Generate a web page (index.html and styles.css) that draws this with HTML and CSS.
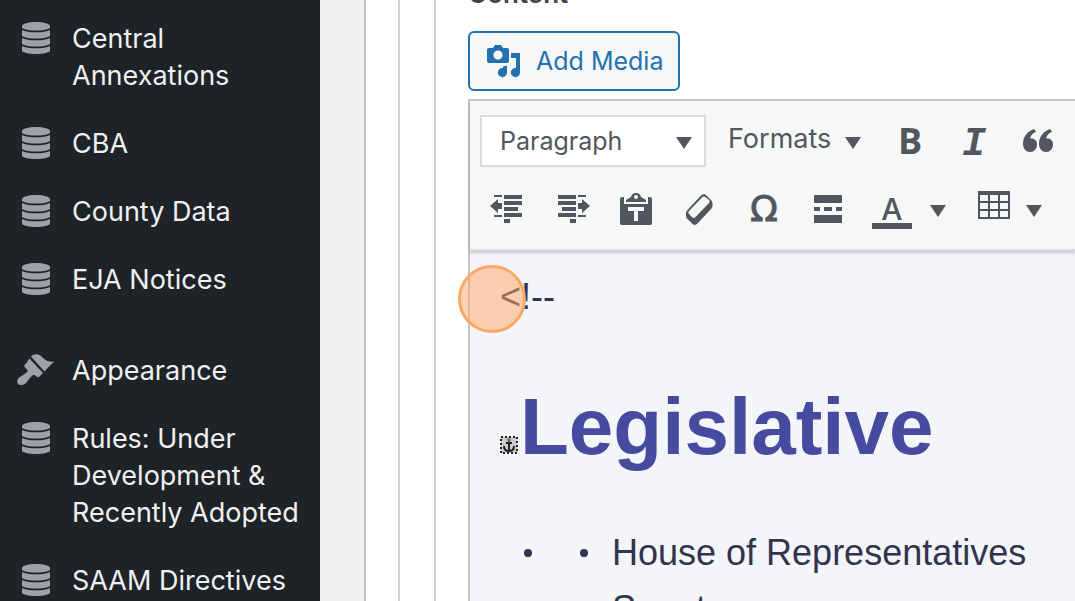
FILE: index.html
```html
<!DOCTYPE html>
<html lang="en">
<head>
    <meta charset="UTF-8">
    <meta name="viewport" content="width=device-width, initial-scale=1.0">
    <title>Edit Page</title>
    <link rel="stylesheet" href="styles.css">
</head>
<body>
    <!-- Shared icons -->
    <svg class="sprite" aria-hidden="true">
        <symbol id="database" viewBox="0 0 28 32">
            <path d="M0 4c0-2 6-4 14-4s14 2 14 4v2c-3 2-8 2.500-14 2.500S3 8 0 6z"/>
            <path d="M0 8c3 1.800 8 2.300 14 2.300s11-.5 14-2.300V14c-3 2-8 2.500-14 2.500S3 16 0 14z"/>
            <path d="M0 16c3 1.800 8 2.300 14 2.300s11-.5 14-2.300V22c-3 2-8 2.500-14 2.500S3 24 0 22z"/>
            <path d="M0 24c3 1.800 8 2.300 14 2.300s11-.5 14-2.300V29c-2 2-7 3-14 3S2 31 0 29z"/>
        </symbol>
        <symbol id="caret" viewBox="0 0 16 12">
            <path d="M0 0h16L8 12z"/>
        </symbol>
    </svg>

    <div class="layout">
        <!-- Admin menu -->
        <nav class="sidebar">
            <ul class="menu">
                <li><a href="#"><span class="menu-icon"><svg width="28" height="32"><use href="#database"/></svg></span>Central Annexations</a></li>
                <li><a href="#"><span class="menu-icon"><svg width="28" height="32"><use href="#database"/></svg></span>CBA</a></li>
                <li><a href="#"><span class="menu-icon"><svg width="28" height="32"><use href="#database"/></svg></span>County Data</a></li>
                <li><a href="#"><span class="menu-icon"><svg width="28" height="32"><use href="#database"/></svg></span>EJA Notices</a></li>
                <li class="separated"><a href="#"><span class="menu-icon"><svg width="38" height="32" viewBox="0 0 38 32">
                    <path d="M14 2.500C17-.3 21-.5 24 2c4 4 7 6.500 13.500 5.500C33.500 10 31 14 27.500 17.500z"/>
                    <path d="M12.500 4.500 26 19l-3.500 3.500c-1 1-2 1-3 0L17 20.500c-2 1-4 3-6 6C8.500 30 6.500 31.500 3 31c-3.500-1-3.500-5-1-7.500 2.500-2 6-3 9-6.500l-3-3.500c-1-1-.8-2 0-3 2-1.500 2.500-4 4.500-6z"/>
                </svg></span>Appearance</a></li>
                <li><a href="#"><span class="menu-icon"><svg width="28" height="32"><use href="#database"/></svg></span>Rules: Under Development &amp; Recently Adopted</a></li>
                <li><a href="#"><span class="menu-icon"><svg width="28" height="32"><use href="#database"/></svg></span>SAAM Directives</a></li>
            </ul>
        </nav>

        <main class="main">
            <div class="panel">
                <div class="group">
                    <div class="field">
                        <div class="field-label">Content</div>

                        <button type="button" class="add-media">
                            <svg width="34" height="34" viewBox="0 0 34 34">
                                <path fill-rule="evenodd" d="M6 4l2-3h6l2 3h4q2 0 2 2v11q0 2-2 2H2q-2 0-2-2V6q0-2 2-2zM11 6.500a4.600 4.600 0 1 0 0 9.200 4.600 4.600 0 0 0 0-9.200z"/>
                                <path d="M24 9h9v19.500a4.600 4.600 0 1 1-4-4.500V14h-5z"/>
                                <path d="M16 22.500l4-1v7a4.600 4.600 0 1 1-4-4.500z"/>
                            </svg>
                            Add Media
                        </button>

                        <div class="editor">
                            <div class="toolbar">
                                <div class="toolbar-row">
                                    <div class="format-select">
                                        <select aria-label="Block format">
                                            <option>Paragraph</option>
                                            <option>Heading 1</option>
                                            <option>Heading 2</option>
                                        </select>
                                        <svg class="caret" width="16" height="12"><use href="#caret"/></svg>
                                    </div>
                                    <button type="button" class="formats">Formats <svg width="16" height="12"><use href="#caret"/></svg></button>
                                    <button type="button" class="tool bold" aria-label="Bold">B</button>
                                    <button type="button" class="tool italic" aria-label="Italic">I</button>
                                    <button type="button" class="tool" aria-label="Blockquote">
                                        <svg width="40" height="40" viewBox="0 0 40 40">
                                            <path d="M16 8l2 3c-4 1.500-5.500 4-5.500 6.500 4-.5 6.500 2 6.500 6S16 31 12.500 31C8 31 5 27.500 5 22.500 5 15.500 10 10 16 8z"/>
                                            <path d="M32 8l2 3c-4 1.500-5.500 4-5.500 6.500 4-.5 6.500 2 6.500 6S32 31 28.500 31c-4.500 0-7.500-3.500-7.500-8.500C21 15.500 26 10 32 8z"/>
                                        </svg>
                                    </button>
                                </div>

                                <div class="toolbar-row">
                                    <button type="button" class="tool" aria-label="Decrease indent">
                                        <svg width="40" height="40" viewBox="0 0 40 40">
                                            <path d="M2 17l8-7v4h4v6h-4v4zM6 6h8v2H6zM6 26h8v2H6zM16 6h18v4H16zM16 12h18v4H16zM16 18h14v4H16zM16 24h18v4H16zM16 30h6v4h-6z"/>
                                        </svg>
                                    </button>
                                    <button type="button" class="tool" aria-label="Increase indent">
                                        <svg width="40" height="40" viewBox="0 0 40 40">
                                            <path d="M38 17l-8-7v4h-4v6h4v4zM26 6h8v2h-8zM26 26h8v2h-8zM6 6h18v4H6zM6 12h18v4H6zM10 18h14v4H10zM6 24h18v4H6zM18 30h6v4h-6z"/>
                                        </svg>
                                    </button>
                                    <button type="button" class="tool" aria-label="Paste as text">
                                        <svg width="40" height="40" viewBox="0 0 40 40">
                                            <path fill-rule="evenodd" d="M10 11l5-3q1-4 5-4t5 4l5 3v2H10zM20 6a2 2 0 1 0 0 4 2 2 0 0 0 0-4z"/>
                                            <path fill-rule="evenodd" d="M6 8h2v7h24V8h2q2 0 2 2v24q0 2-2 2H6q-2 0-2-2V10q0-2 2-2zM12 18v4h6v10h4V22h6v-4z"/>
                                        </svg>
                                    </button>
                                    <button type="button" class="tool" aria-label="Clear formatting">
                                        <svg width="40" height="40" viewBox="0 0 40 40">
                                            <path fill-rule="evenodd" d="M21 6.500q3-2.500 5.500 0l4.500 4.500q1.500 1.500 1.500 4v2q0 1.500-1.500 3L17.500 34.500q-2.500 2.500-5 .5L7.500 30Q6 28.500 6 26.500V24q0-1.500 1.500-3zM22.500 8 9 22q-1.500 2 0 3l3.500 3.500q1.500 1 3-.5L29 14q1.500-2 0-3l-3.500-3q-1.500-1-3 0z"/>
                                        </svg>
                                    </button>
                                    <button type="button" class="tool omega" aria-label="Special character">Ω</button>
                                    <button type="button" class="tool" aria-label="Read more">
                                        <svg width="40" height="40" viewBox="0 0 40 40">
                                            <path d="M6 6h28v8H6zM6 18h6v4H6zM16 18h8v4h-8zM28 18h6v4h-6zM6 26h28v8H6z"/>
                                        </svg>
                                    </button>
                                    <div class="split">
                                        <button type="button" class="tool" aria-label="Text color"><span class="text-color">A</span></button>
                                        <button type="button" class="open" aria-label="Choose text color"><svg width="16" height="12"><use href="#caret"/></svg></button>
                                    </div>
                                    <div class="split">
                                        <button type="button" class="tool narrow" aria-label="Table">
                                            <svg width="32" height="36" viewBox="0 0 32 36">
                                                <path fill-rule="evenodd" d="M0 0h32v28H0zM2 4v6h8V4zM12 4v6h8V4zM22 4v6h8V4zM2 12v6h8v-6zM12 12v6h8v-6zM22 12v6h8v-6zM2 20v6h8v-6zM12 20v6h8v-6zM22 20v6h8v-6z"/>
                                            </svg>
                                        </button>
                                        <button type="button" class="open" aria-label="Table options"><svg width="16" height="12"><use href="#caret"/></svg></button>
                                    </div>
                                </div>
                            </div>

                            <div class="document">
                                <p>&lt;!--</p>
                                <h1><svg class="anchor" width="18" height="18" viewBox="0 0 18 18">
                                    <rect x="1" y="1" width="16" height="16" fill="#ccc" stroke="#222" stroke-width="2" stroke-dasharray="2 2"/>
                                    <path d="M9 4v11M6 7h6M4 10c0 3 2 5 5 5s5-2 5-5" fill="none" stroke="#222" stroke-width="2"/>
                                    <circle cx="9" cy="4" r="2" fill="#777"/>
                                </svg>Legislative</h1>
                                <ul>
                                    <li>
                                        <ul>
                                            <li>House of Representatives</li>
                                            <li>Senate</li>
                                        </ul>
                                    </li>
                                </ul>
                                <span class="click-marker"></span>
                            </div>
                        </div>
                    </div>
                </div>
            </div>
        </main>
    </div>
</body>
</html>
```

FILE: styles.css
```css
* {
    box-sizing: border-box;
}
body {
    margin: 0;
    background-color: #f0f0f1;
    color: #3c434a;
    font-family: Inter, "Liberation Sans", sans-serif;
    font-size: 25px;
    line-height: 36px;
}
button, select {
    font: inherit;
    color: inherit;
}
button {
    padding: 0;
    border: none;
    background: none;
    cursor: pointer;
}
svg {
    display: block;
    flex-shrink: 0;
    fill: currentColor;
}
ul {
    list-style: none;
    margin: 0;
    padding: 0;
}
.sprite {
    position: absolute;
    width: 0;
    height: 0;
}
.layout {
    display: flex;
    height: 100vh;
    overflow: hidden;
}

/* Admin menu */
.sidebar {
    flex: 0 0 320px;
    padding-top: 4px;
    background-color: #1d2327;
    font-size: 27px;
    line-height: 37px;
}
.menu a {
    display: flex;
    padding: 16px 16px 15px 0;
    color: #f0f0f1;
    text-decoration: none;
}
.menu-icon {
    flex: 0 0 72px;
    display: flex;
    justify-content: center;
    align-self: flex-start;
    padding-top: 2px;
    color: #9da1a9;
}
.menu .separated {
    margin-top: 23px;
}

/* Nested boxes around the editor */
.main {
    flex: 1;
    min-width: 0;
    padding-left: 44px;
}
.panel, .group, .field {
    min-height: 100%;
    border-left: 2px solid #c3c4c7;
    background-color: #fff;
    padding-left: 32px;
}
.panel, .group {
    display: flex;
    min-height: 100vh;
}
.group, .field {
    flex: 1;
    min-width: 0;
    border-color: #ccd0d4;
}
.group {
    padding-left: 34px;
}
.field-label {
    margin-top: -24px;
    margin-bottom: 19px;
    font-size: 26px;
    font-weight: 600;
}
.add-media {
    display: flex;
    align-items: center;
    gap: 15px;
    height: 60px;
    padding: 0 15px 0 17px;
    border: 2px solid #2271b1;
    border-radius: 6px;
    background-color: #f6f7f7;
    color: #2271b1;
}

/* Editor */
.editor {
    margin-top: 8px;
    border: 2px solid #c3c4c7;
    border-right: none;
    background-color: #f3f5f9;
}
.toolbar {
    position: relative;
    z-index: 1;
    padding: 6px;
    border-bottom: 2px solid #dcdcde;
    background-color: #f6f7f7;
    box-shadow: 0 2px 3px rgba(0, 0, 0, 0.2);
    color: #50575e;
    height: 150px;
}
.toolbar-row {
    display: flex;
    align-items: center;
    height: 68px;
    overflow: hidden;
}
.format-select {
    position: relative;
    flex: 0 0 226px;
    margin-left: 4px;
}
.format-select select {
    display: block;
    width: 100%;
    height: 52px;
    padding: 0 18px;
    border: 2px solid #dcdcde;
    background-color: #fff;
    appearance: none;
}
.format-select .caret {
    position: absolute;
    top: 22px;
    right: 14px;
    pointer-events: none;
}
.formats {
    display: flex;
    align-items: center;
    gap: 14px;
    flex: 0 0 172px;
    padding-left: 22px;
    padding-bottom: 4px;
    font-size: 27px;
}
.formats svg {
    margin-top: 8px;
}
.tool {
    display: flex;
    align-items: center;
    justify-content: center;
    flex: 0 0 64px;
    height: 60px;
}
.bold {
    font-family: "Open Sans", sans-serif;
    font-size: 36px;
    font-weight: 700;
}
.italic {
    padding-top: 8px;
    font-family: "Liberation Mono", monospace;
    font-size: 40px;
    font-style: italic;
    font-weight: 700;
}
.omega {
    font-family: "DejaVu Sans", sans-serif;
    font-size: 36px;
    -webkit-text-stroke: 1px currentColor;
}
.split {
    display: flex;
    margin-right: 16px;
}
.narrow {
    flex-basis: 52px;
}
.open {
    display: flex;
    align-items: center;
    justify-content: center;
    width: 28px;
    padding-top: 4px;
}
.text-color {
    width: 40px;
    height: 40px;
    border-bottom: 6px solid #50575e;
    font-size: 30px;
    font-weight: 500;
    line-height: 40px;
}

/* Edited document */
.document {
    position: relative;
    z-index: 2;
    min-height: 500px;
    padding: 26px 0 0 30px;
    color: #32344f;
    font-family: "Liberation Sans", Arial, sans-serif;
    font-size: 36px;
    line-height: 56px;
    white-space: nowrap;
}
.document p {
    height: 40px;
    margin: 0;
    line-height: 40px;
}
.document h1 {
    display: flex;
    align-items: baseline;
    gap: 2px;
    margin: 64px 0 52px;
    color: #464b9f;
    font-size: 80px;
    line-height: 92px;
}
.document li {
    display: flex;
    gap: 24px;
}
.document li::before {
    content: "";
    flex: 0 0 8px;
    height: 8px;
    margin-top: 24px;
    border-radius: 50%;
    background-color: currentColor;
}
.document > ul {
    padding-left: 24px;
}
.document > ul > li {
    gap: 48px;
}
.click-marker {
    position: absolute;
    top: 14px;
    left: -12px;
    width: 68px;
    height: 68px;
    border: 3px solid #f9a866;
    border-radius: 50%;
    background-color: rgba(255, 165, 100, 0.5);
}
```
